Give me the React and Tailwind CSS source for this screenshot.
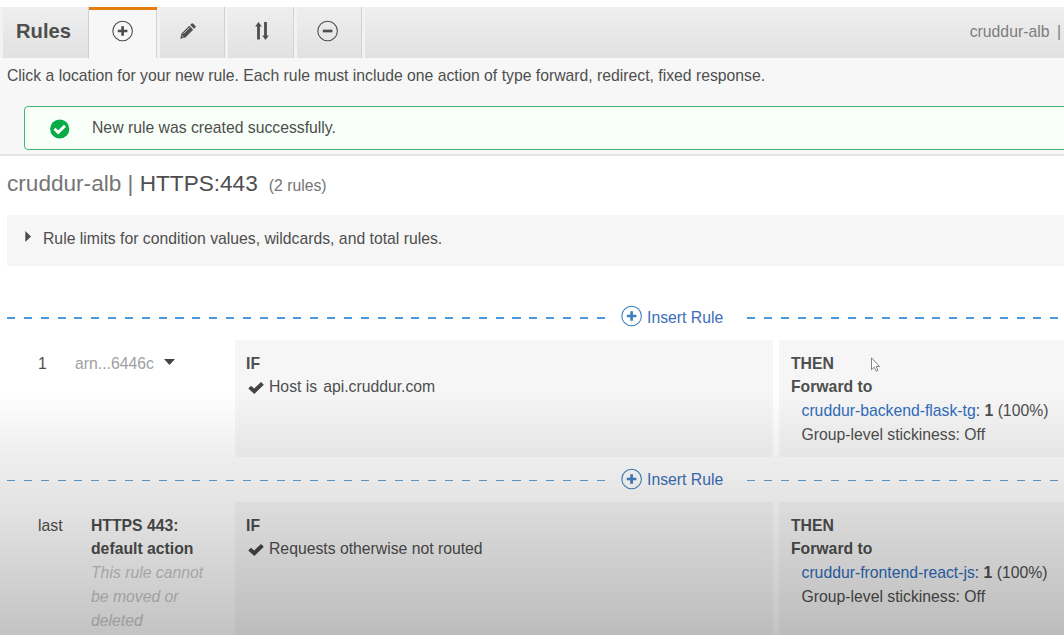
import React from "react";

function CirclePlus({ className, minus }) {
  return (
    <svg viewBox="0 0 22 22" className={className} fill="none" stroke="currentColor">
      <circle cx="10.6" cy="11" r="9.8" strokeWidth="1.1" />
      <path d={minus ? "M5.8 11h9.6" : "M5.8 11h9.6M10.6 6.2v9.6"} strokeWidth="2.7" />
    </svg>
  );
}

function Check() {
  return (
    <svg viewBox="0 0 16 13" className="mr-[5px] mt-[7px] h-[13px] w-4 shrink-0" fill="#444">
      <path d="M0.3 6.6 3 3.7 6.1 6.6 13 0.1 15.8 2.7 6.3 12.1Z" />
    </svg>
  );
}

function Tab({ children }) {
  return (
    <div className="flex h-full w-[68.3px] shrink-0 border-r border-[#d2d2d2] pl-[3px] shadow-[inset_3px_0_0_#f2f2f2]">
      <div className="flex w-full items-center justify-center pb-[3px] pr-[9px]">{children}</div>
    </div>
  );
}

function InsertLine({ thin }) {
  const dash = thin
    ? "mt-[12px] h-px bg-[repeating-linear-gradient(90deg,#62a0d6_0_8px,transparent_8px_16.85px)]"
    : "mt-[12px] h-[2px] bg-[repeating-linear-gradient(90deg,#4b98dc_0_8px,transparent_8px_16.85px)]";
  return (
    <div className="flex h-[22px] items-start pl-[7px]">
      <div className={"w-[598px] shrink-0 " + dash} />
      <div className="flex h-[22px] w-[142px] shrink-0 items-center pl-4 text-[#3b6fb9]">
        <CirclePlus className="mr-[4px] h-[22px] w-[22px] text-[#4080bd]" />
        <span className={thin ? "whitespace-nowrap pt-[2px]" : "whitespace-nowrap pt-[4px]"}>Insert Rule</span>
      </div>
      <div className={"flex-1 " + dash} />
    </div>
  );
}

function Rule({ height, left, condition, group }) {
  return (
    <div className={"flex shrink-0 leading-[23.75px] " + height}>
      <div className="flex w-[235px] shrink-0 pt-[11.6px]">{left}</div>
      <div className="w-[538px] shrink-0 bg-[#f6f6f6] pl-[11px] pt-[11.6px]">
        <div className="font-bold">IF</div>
        <div className="flex pl-[2px]">
          <Check />
          {condition}
        </div>
      </div>
      <div className="ml-[6px] flex-1 whitespace-nowrap bg-[#f6f6f6] pl-3 pt-[11.6px]">
        <div className="font-bold">THEN</div>
        <div className="font-bold">Forward to</div>
        <div className="pl-[10.5px]">
          <span className="text-[#2f6cba]">{group}</span>: <b>1</b> (100%)
        </div>
        <div className="pl-[10.5px]">Group-level stickiness: Off</div>
      </div>
    </div>
  );
}

export default function App() {
  return (
    <div className="relative flex h-[635px] w-[1064px] flex-col overflow-hidden bg-white pt-[7px] font-['Liberation_Sans',Arial,sans-serif] text-[15.75px] text-[#4e4e4e]">
      <header className="flex h-[51px] shrink-0 bg-linear-to-b from-[#efefef] to-[#e1e1e1]">
        <div className="flex h-full w-[89px] shrink-0 items-center border-r border-[#cfcfcf] pb-[3px] pl-4 text-[20.2px] font-bold shadow-[inset_3px_0_0_#f2f2f2]">
          Rules
        </div>
        <div className="flex h-full w-[68px] shrink-0 flex-col border-r border-[#d2d2d2] bg-[#f7f7f7]">
          <div className="h-[3px] w-[68px] bg-[#e47d0c]" />
          <div className="flex flex-1 items-center justify-center pb-[6px]">
            <CirclePlus className="h-[22px] w-[22px]" />
          </div>
        </div>
        <Tab>
          <svg viewBox="0 0 16 16" className="h-4 w-4" fill="currentColor">
            <path d="M0.3 15.7 1.5 10.6 9.3 2.8 13.2 6.7 5.4 14.5ZM10.2 1.9 11.6 0.5Q12.2 0 12.9 0.5L15.5 3.1Q16 3.8 15.5 4.4L14.1 5.8Z" />
            <path d="M3.4 10.8 9.6 4.6M1.8 12.5l1.7 1.7" stroke="#ececec" strokeWidth=".8" />
          </svg>
        </Tab>
        <Tab>
          <svg viewBox="0 0 14 18" className="ml-3 h-[18px] w-[14px]" fill="currentColor">
            <path d="M0.2 4.5 3.5 0 6.8 4.5H4.9V17.6H2.1V4.5ZM9.1 0h2.8v13.5H13.8L10.5 18 7.2 13.5H9.1Z" />
          </svg>
        </Tab>
        <Tab>
          <CirclePlus minus className="ml-[7px] h-[22px] w-[22px]" />
        </Tab>
        <div className="flex flex-1 items-center justify-end gap-[7.5px] pb-[2px] pr-[3px] text-[#7d7d7d] shadow-[inset_3px_0_0_#f2f2f2]">
          <span>cruddur-alb</span>
          <span>|</span>
        </div>
      </header>

      <section className="h-[98px] shrink-0 border-b-2 border-[#e4e4e4] bg-[#f7f7f7]">
        <p className="h-12 whitespace-nowrap pl-[7px] pt-[6px] leading-6">
          Click a location for your new rule. Each rule must include one action of type forward, redirect, fixed response.
        </p>
        <div className="ml-[23.5px] mr-[-4px] flex h-11 items-center rounded border border-[#42b574] bg-[#f7fff8] pl-[25px]">
          <svg viewBox="0 0 20 20" className="h-5 w-5 translate-y-px">
            <circle cx="9.7" cy="10" r="9.6" fill="#08ac46" />
            <path d="m4.5 9.8 3.7 3.7 6.8-6.7" fill="none" stroke="white" strokeWidth="3" />
          </svg>
          <span className="ml-[22.5px]">New rule was created successfully.</span>
        </div>
      </section>

      <h1 className="flex h-[59px] shrink-0 items-baseline whitespace-pre pl-[7px] pt-[11px] text-[22.6px] leading-[34px]">
        <span className="text-[#757575]">cruddur-alb | </span>
        <span>HTTPS:443</span>
        <span className="ml-[11px] text-[15.75px] text-[#757575]">(2 rules)</span>
      </h1>
      <div className="ml-[7px] flex h-[51px] shrink-0 bg-[#f6f6f6] pl-[18px] pt-[12px] leading-6">
        <svg viewBox="0 0 6 11" className="mr-[12px] mt-[4px] h-[11px] w-[6px]" fill="currentColor">
          <path d="M0.3 0 6 5.5 0.3 11Z" />
        </svg>
        Rule limits for condition values, wildcards, and total rules.
      </div>

      <div className="h-[39px] shrink-0" />
      <InsertLine />
      <div className="h-[13px] shrink-0" />
      <Rule
        height="h-[117px]"
        condition={
          <>
            <span>Host is</span>
            <span className="ml-[6px]">api.cruddur.com</span>
          </>
        }
        group="cruddur-backend-flask-tg"
        left={
          <>
            <span className="w-[75px] pl-[38px]">1</span>
            <span className="text-[#a0a0a0]">arn...6446c</span>
            <svg viewBox="0 0 11 6" className="ml-[10px] mt-[7px] h-[6px] w-[11px]" fill="#444">
              <path d="M0 0H11L5.5 6Z" />
            </svg>
          </>
        }
      />
      <div className="h-[11px] shrink-0" />
      <InsertLine thin />
      <div className="h-[12px] shrink-0" />
      <Rule
        height="h-[134px]"
        condition={<span>Requests otherwise not routed</span>}
        group="cruddur-frontend-react-js"
        left={
          <>
            <span className="w-[91px] shrink-0 pl-[38px]">last</span>
            <div className="w-[125px]">
              <b>HTTPS 443: default action</b>
              <div className="italic text-[#c8c8c8]">This rule cannot be moved or deleted</div>
            </div>
          </>
        }
      />

      <div className="pointer-events-none absolute inset-x-0 bottom-0 h-[245px] bg-[linear-gradient(to_bottom,rgba(0,0,0,0)_0%,rgba(0,0,0,.065)_27%,rgba(0,0,0,.11)_48%,rgba(0,0,0,.235)_100%)]" />
      <svg viewBox="0 0 9 15" className="absolute left-[871px] top-[357px] h-[15px] w-[9px]" fill="#fff" stroke="#666" strokeWidth=".8">
        <path d="M.5.8V12.8L3.3 10.2 5.2 14.3 7 13.4 5.1 9.5H8.5Z" />
      </svg>
    </div>
  );
}
